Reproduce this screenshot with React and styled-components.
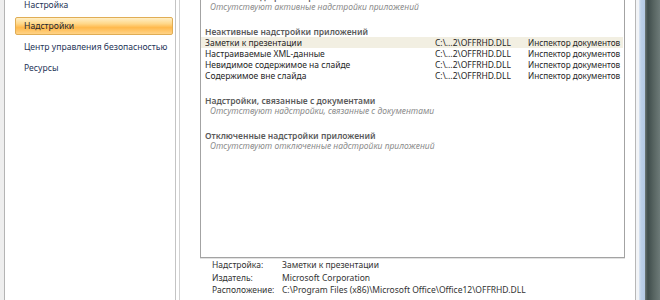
import React from 'react'
import styled, { createGlobalStyle } from 'styled-components'

const GlobalStyle = createGlobalStyle`
    html, body {
        margin: 0;
        padding: 0;
        background: #fff;
        overflow: hidden;
    }
`

const Window = styled.div`
    display: flex;
    width: 660px;
    height: 300px;
    overflow: hidden;
    background: #fff;
    font-family: "Noto Sans", "Open Sans", sans-serif;
    font-size: 8.5px;
    color: #222;
`

const LeftEdge = styled.div`
    width: 4px;
    flex-shrink: 0;
    background: #eeeeee;
    border-right: 1px solid #b4b4b4;
`

const Sidebar = styled.div`
    width: 170px;
    flex-shrink: 0;
    border-right: 1px solid #c4c4c4;
    background: #fff;
`

const NavList = styled.div`
    display: flex;
    flex-direction: column;
    gap: 3px;
    margin-top: -4px;
    padding: 0 2px 0 10px;
`

const NavItem = styled.div`
    box-sizing: border-box;
    height: 18px;
    display: flex;
    align-items: center;
    padding-left: 8px;
    font-size: 8.6px;
    white-space: nowrap;
    color: #1f3558;
    border: 1px solid transparent;
    border-radius: 2px;
    ${props => props.active && `
        border-color: #e0ad55;
        background: linear-gradient(to bottom, #ffefc6 0%, #ffd88a 35%, #ffb94c 60%, #ffd387 100%);
        color: #1d2530;
    `};
`

const Main = styled.div`
    flex: 1;
    display: flex;
    flex-direction: column;
    margin-left: 3px;
    border-left: 1px solid #d2d2d2;
    padding: 0 10px 0 20px;
`

const ListBox = styled.div`
    margin-top: -12px;
    height: 266px;
    border: 1px solid #a3a3a3;
    box-shadow: 0 1px 0 #e2e2e2;
    padding-top: 2px;
    background: #fff;
`

const Group = styled.div`
    margin-bottom: 14px;
`

const GroupTitle = styled.div`
    height: 11px;
    line-height: 11px;
    padding-left: 4px;
    font-weight: 600;
    color: #5b5b5b;
`

const Empty = styled.div`
    height: 10px;
    line-height: 10px;
    padding-left: 9px;
    font-style: italic;
    color: #8c8c8c;
`

const Row = styled.div`
    display: grid;
    grid-template-columns: 230px 93px 1fr;
    height: 11px;
    line-height: 11px;
    padding-left: 4px;
    margin-right: 1px;
    color: #262626;
    background: ${props => props.selected ? '#f2efe2' : 'transparent'};
`

const Cell = styled.span`
    white-space: nowrap;
    overflow: hidden;
    font-size: ${props => props.small ? '8.2px' : 'inherit'};
`

const Details = styled.div`
    display: grid;
    grid-template-columns: 70px 1fr;
    margin-top: 1px;
    padding-left: 12px;
    line-height: 12.5px;
    color: #333;
    white-space: nowrap;
`

const Frame = styled.div`
    width: 25px;
    flex-shrink: 0;
    background: linear-gradient(to right,
        #b7b7b7 0px, #b7b7b7 1px,
        #f2f4f7 1px, #f2f4f7 4px,
        #dce6f2 4px, #bcd0ea 6px, #b4c9e6 10px,
        #6c7878 10px, #4a5656 12px,
        #3f4c4c 13px, #55625f 18px, #6d7a78 25px);
`

const active = [
    ['Заметки к презентации', 'C:\\...2\\OFFRHD.DLL', 'Инспектор документов'],
    ['Настраиваемые XML-данные', 'C:\\...2\\OFFRHD.DLL', 'Инспектор документов'],
    ['Невидимое содержимое на слайде', 'C:\\...2\\OFFRHD.DLL', 'Инспектор документов'],
    ['Содержимое вне слайда', 'C:\\...2\\OFFRHD.DLL', 'Инспектор документов'],
]

const App = () => {
    return (
        <>
            <GlobalStyle />
            <Window>
                <LeftEdge />
                <Sidebar>
                    <NavList>
                        <NavItem>Настройка</NavItem>
                        <NavItem active>Надстройки</NavItem>
                        <NavItem>Центр управления безопасностью</NavItem>
                        <NavItem>Ресурсы</NavItem>
                    </NavList>
                </Sidebar>
                <Main>
                    <ListBox>
                        <Group>
                            <GroupTitle>Активные надстройки приложений</GroupTitle>
                            <Empty>Отсутствуют активные надстройки приложений</Empty>
                        </Group>
                        <Group>
                            <GroupTitle>Неактивные надстройки приложений</GroupTitle>
                            {active.map((r, i) => (
                                <Row key={r[0]} selected={i === 0}>
                                    <Cell>{r[0]}</Cell>
                                    <Cell>{r[1]}</Cell>
                                    <Cell small>{r[2]}</Cell>
                                </Row>
                            ))}
                        </Group>
                        <Group>
                            <GroupTitle>Надстройки, связанные с документами</GroupTitle>
                            <Empty>Отсутствуют надстройки, связанные с документами</Empty>
                        </Group>
                        <Group>
                            <GroupTitle>Отключенные надстройки приложений</GroupTitle>
                            <Empty>Отсутствуют отключенные надстройки приложений</Empty>
                        </Group>
                    </ListBox>
                    <Details>
                        <span>Надстройка:</span>
                        <span>Заметки к презентации</span>
                        <span>Издатель:</span>
                        <span>Microsoft Corporation</span>
                        <span>Расположение:</span>
                        <span>C:\Program Files (x86)\Microsoft Office\Office12\OFFRHD.DLL</span>
                    </Details>
                </Main>
                <Frame />
            </Window>
        </>
    )
}

export default App
